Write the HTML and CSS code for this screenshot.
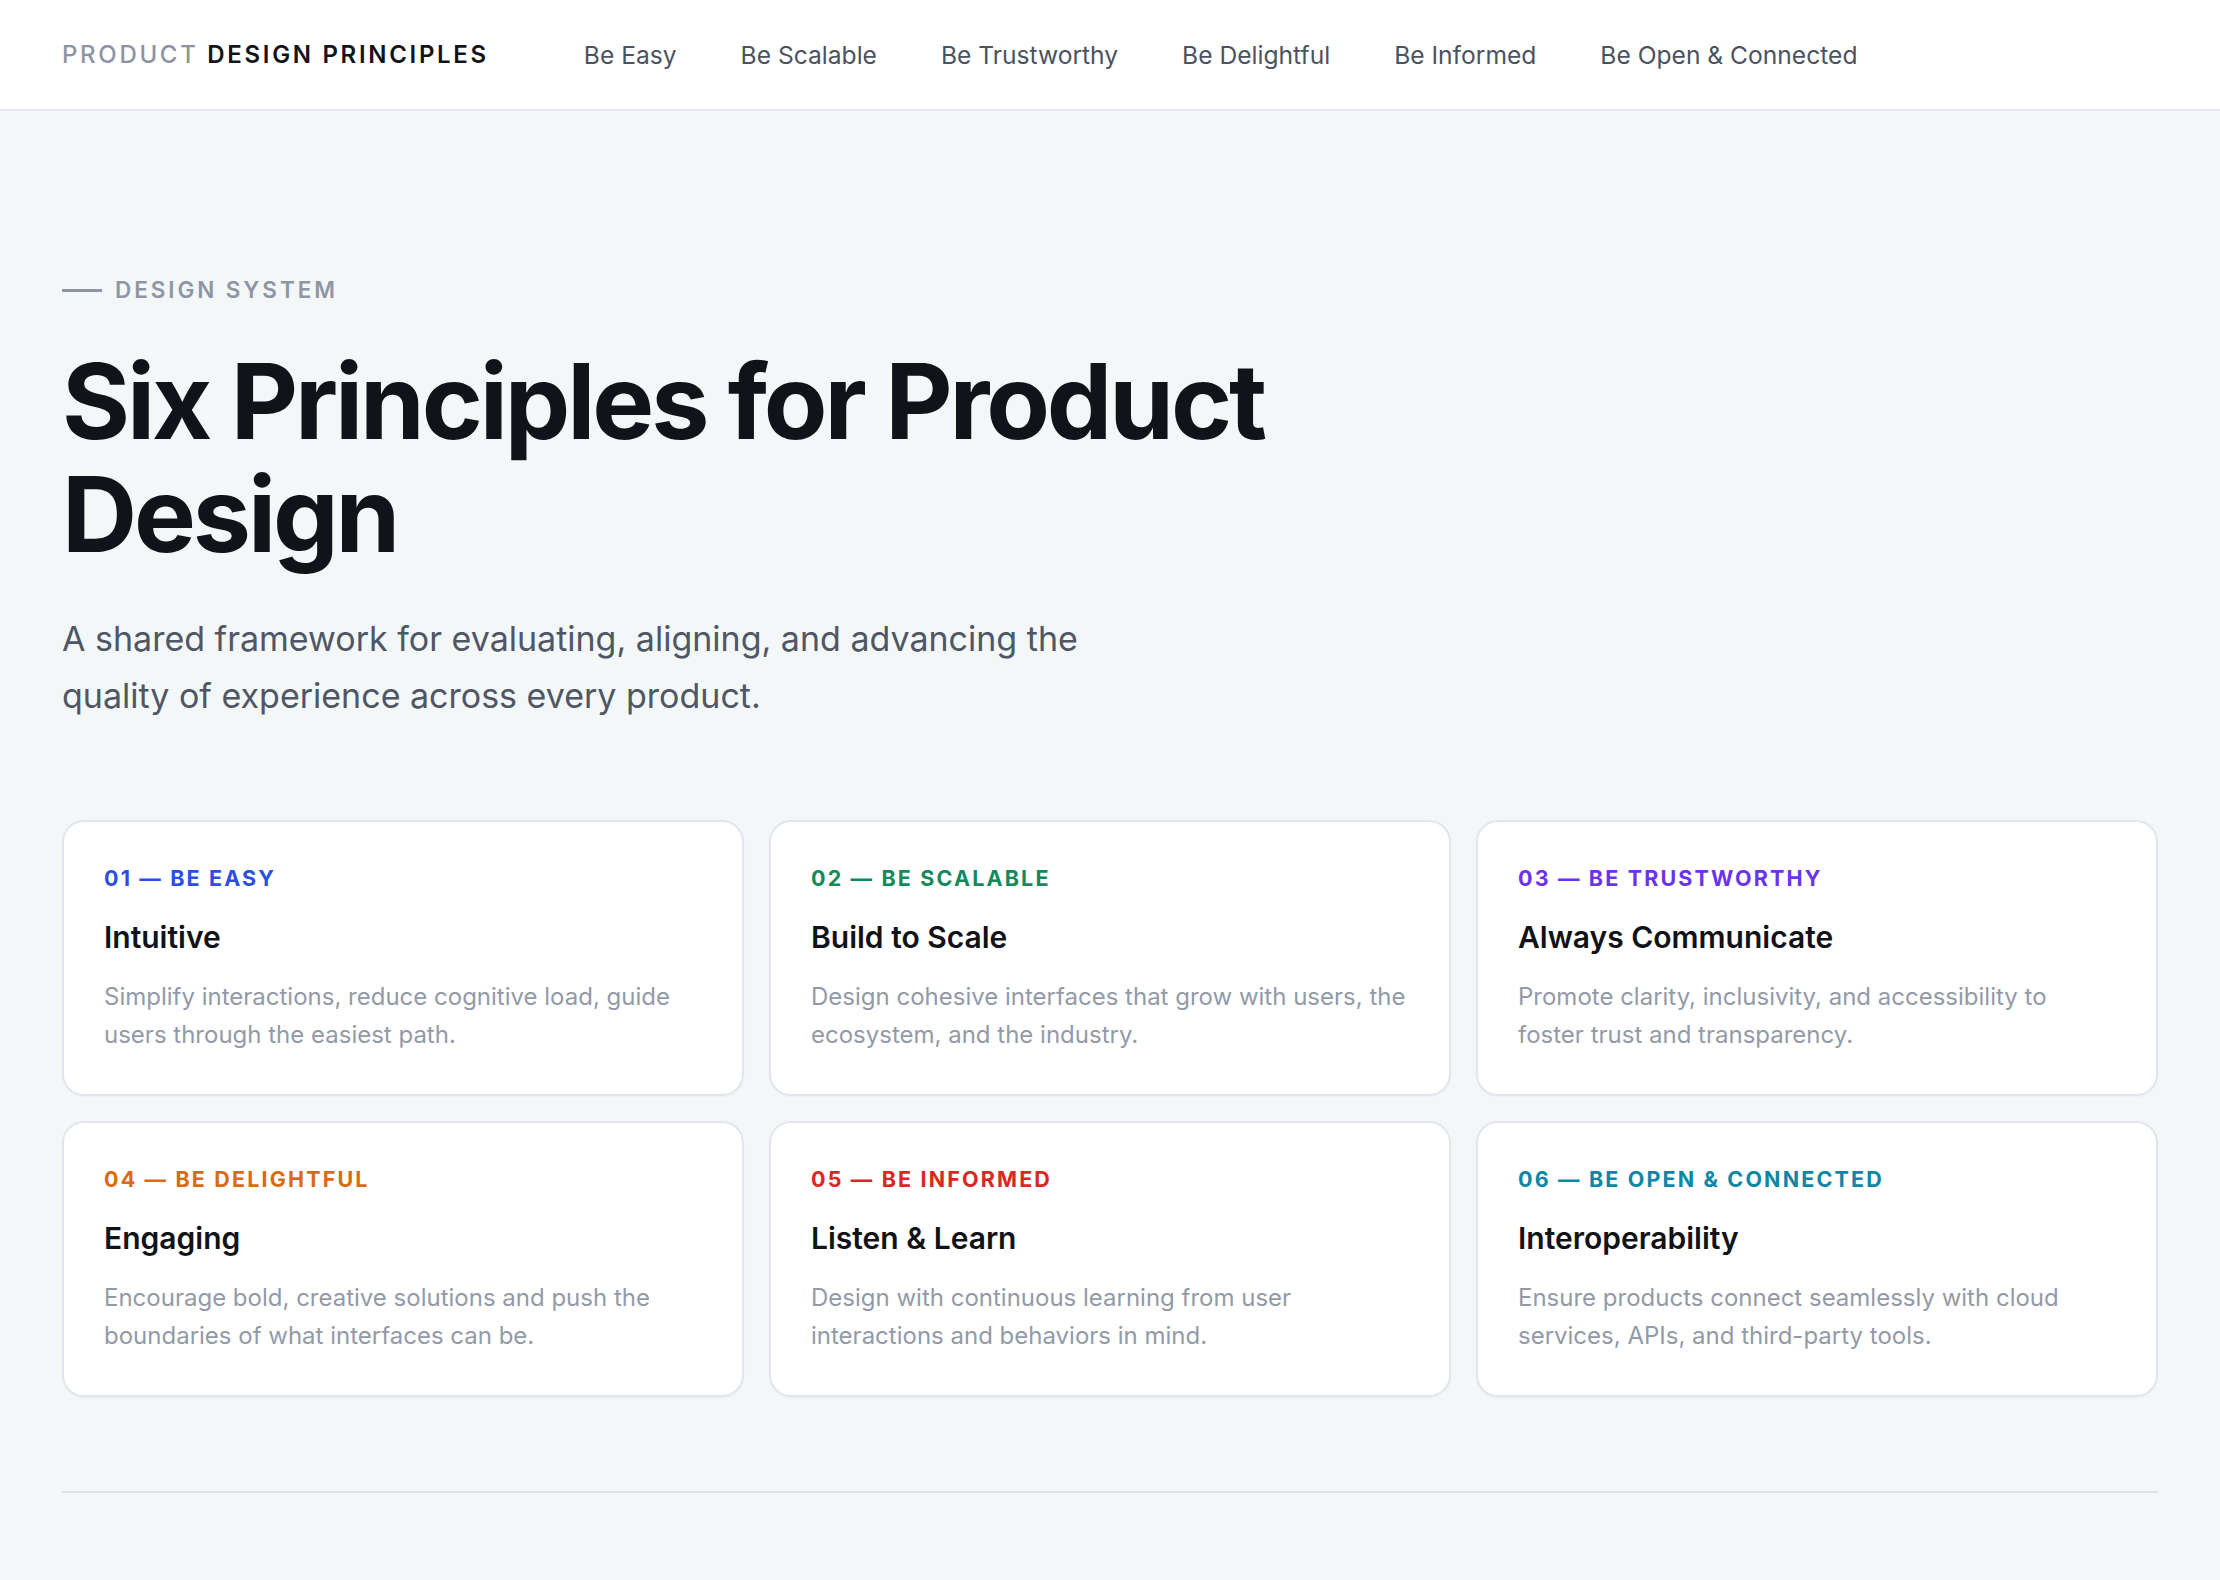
FILE: index.html
```html
<!DOCTYPE html>
<html lang="en">
<head>
<meta charset="utf-8">
<title>Product Design Principles</title>
<link rel="stylesheet" href="styles.css">
</head>
<body>
<header class="nav">
  <div class="brand"><span class="brand-muted">PRODUCT</span> DESIGN PRINCIPLES</div>
  <nav class="nav-links">
    <a href="#">Be Easy</a>
    <a href="#">Be Scalable</a>
    <a href="#">Be Trustworthy</a>
    <a href="#">Be Delightful</a>
    <a href="#">Be Informed</a>
    <a href="#">Be Open &amp; Connected</a>
  </nav>
</header>
<main class="main">
  <section class="hero">
    <div class="eyebrow"><span class="eyebrow-line"></span>DESIGN SYSTEM</div>
    <h1 class="title">Six Principles for Product<br>Design</h1>
    <p class="lead">A shared framework for evaluating, aligning, and advancing the<br>quality of experience across every product.</p>
  </section>
  <section class="grid">
    <article class="card">
      <div class="card-label c-blue">01 — BE EASY</div>
      <h2 class="card-title">Intuitive</h2>
      <p class="card-text">Simplify interactions, reduce cognitive load, guide users through the easiest path.</p>
    </article>
    <article class="card">
      <div class="card-label c-green">02 — BE SCALABLE</div>
      <h2 class="card-title">Build to Scale</h2>
      <p class="card-text">Design cohesive interfaces that grow with users, the ecosystem, and the industry.</p>
    </article>
    <article class="card">
      <div class="card-label c-purple">03 — BE TRUSTWORTHY</div>
      <h2 class="card-title">Always Communicate</h2>
      <p class="card-text">Promote clarity, inclusivity, and accessibility to foster trust and transparency.</p>
    </article>
    <article class="card">
      <div class="card-label c-orange">04 — BE DELIGHTFUL</div>
      <h2 class="card-title">Engaging</h2>
      <p class="card-text">Encourage bold, creative solutions and push the boundaries of what interfaces can be.</p>
    </article>
    <article class="card">
      <div class="card-label c-red">05 — BE INFORMED</div>
      <h2 class="card-title">Listen &amp; Learn</h2>
      <p class="card-text">Design with continuous learning from user interactions and behaviors in mind.</p>
    </article>
    <article class="card">
      <div class="card-label c-teal">06 — BE OPEN &amp; CONNECTED</div>
      <h2 class="card-title">Interoperability</h2>
      <p class="card-text">Ensure products connect seamlessly with cloud services, APIs, and third-party tools.</p>
    </article>
  </section>
  <hr class="divider">
</main>
</body>
</html>
```

FILE: styles.css
```css
* { box-sizing: border-box; }

html, body {
  margin: 0;
  padding: 0;
}

body {
  background: #f4f7f8;
  font-family: "Inter", "Noto Sans", "Liberation Sans", sans-serif;
  color: #111318;
  min-height: 1580px;
}

.nav {
  height: 111px;
  background: #ffffff;
  border-bottom: 2px solid #e3e7ec;
  display: flex;
  align-items: center;
  padding: 0 62px;
}

.brand {
  font-size: 24px;
  font-weight: 600;
  letter-spacing: 0.112em;
  color: #121419;
  white-space: nowrap;
}

.brand-muted {
  color: #8c94a3;
  font-weight: 500;
}

.nav-links {
  display: flex;
  gap: 64px;
  margin-left: 95px;
}

.nav-links a {
  font-size: 24.6px;
  color: #4b5260;
  text-decoration: none;
  white-space: nowrap;
}

.main {
  padding: 164px 62px 86px;
}

.hero {
  display: flex;
  flex-direction: column;
  align-items: flex-start;
}

.eyebrow {
  display: flex;
  align-items: center;
  gap: 13px;
  font-size: 22.5px;
  line-height: 30px;
  font-weight: 600;
  letter-spacing: 0.13em;
  color: #8e96a5;
}

.eyebrow-line {
  width: 40px;
  height: 3px;
  background: #8e96a5;
}

.title {
  margin: 40px 0 0;
  font-size: 104px;
  line-height: 113px;
  font-weight: 700;
  letter-spacing: -0.03em;
  color: #111318;
}

.lead {
  margin: 39px 0 0;
  font-size: 34px;
  line-height: 57px;
  color: #4f5665;
}

.grid {
  margin-top: 96px;
  display: grid;
  grid-template-columns: repeat(3, 1fr);
  gap: 25px;
}

.card {
  background: #ffffff;
  border: 2px solid #e2e6ec;
  border-radius: 22px;
  padding: 42px 40px 40px;
  box-shadow: 0 1px 2px rgba(16, 24, 40, 0.04);
}

.card-label {
  font-size: 21.5px;
  line-height: 28px;
  font-weight: 700;
  letter-spacing: 0.1em;
}

.c-blue { color: #2a4fe2; }
.c-green { color: #148a5c; }
.c-purple { color: #6b34ea; }
.c-orange { color: #db6b12; }
.c-red { color: #dc2626; }
.c-teal { color: #0e86a5; }

.card-title {
  margin: 26px 0 0;
  font-size: 30px;
  line-height: 38px;
  font-weight: 600;
  color: #111318;
}

.card-text {
  margin: 22px 0 0;
  font-size: 24px;
  line-height: 38px;
  color: #939aa7;
}

.divider {
  margin: 94px 0 0;
  border: 0;
  height: 2px;
  background: #dde2e8;
}
```
